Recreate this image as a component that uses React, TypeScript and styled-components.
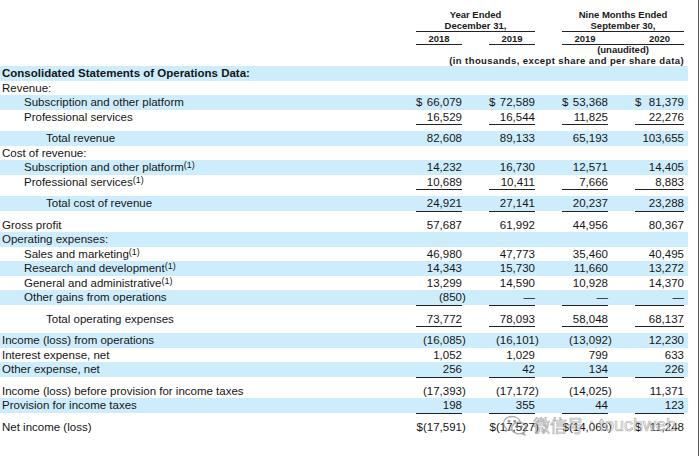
import React from "react";
import styled, { createGlobalStyle } from "styled-components";

const GlobalStyle = createGlobalStyle`
  html, body { margin: 0; padding: 0; background: #ffffff; }
  body { font-family: "Liberation Sans", Arial, sans-serif; color: #151515; }
`;

const Page = styled.div`
  position: relative;
  width: 698px;
  height: 456px;
  border-right: 1px solid #555;
  overflow: hidden;
  font-family: "Liberation Sans", Arial, sans-serif;
  color: #151515;
`;

const columns = "389px 46px 46px 46px 49px";

const Header = styled.div`
  display: grid;
  grid-template-columns: ${columns};
  column-gap: 27px;
  width: 688px;
  padding-top: 10px;
  font-weight: bold;
  font-size: 9.5px;
  line-height: 10.5px;
  color: #1a1a1a;
`;

const HeadCell = styled.div<{ $col: string; $row: number; $rule?: boolean; $align?: string; $spread?: boolean }>`
  grid-column: ${(p) => p.$col};
  grid-row: ${(p) => p.$row};
  text-align: ${(p) => p.$align || "center"};
  border-bottom: ${(p) => (p.$rule ? "1px solid #222" : "none")};
  letter-spacing: ${(p) => (p.$spread ? "0.4px" : "normal")};
  white-space: nowrap;
`;

const YearPair = styled.div`
  display: grid;
  grid-template-columns: 46px 49px;
  justify-content: space-between;
  text-align: center;
`;

const YearCell = styled(HeadCell)`
  padding-top: 1.5px;
`;

const Body = styled.div`
  display: flex;
  flex-direction: column;
  width: 688px;
  font-size: 11.5px;
`;

const Row = styled.div<{ $shade: boolean }>`
  display: grid;
  grid-template-columns: ${columns};
  column-gap: 27px;
  height: 14.5px;
  line-height: 14.5px;
  background: ${(p) => (p.$shade ? "#cdedfd" : "transparent")};
`;

const Label = styled.div<{ $indent: number; $bold?: boolean }>`
  padding-left: ${(p) => 2 + p.$indent * 22}px;
  font-weight: ${(p) => (p.$bold ? "bold" : "normal")};
  white-space: nowrap;
`;

const Note = styled.sup`
  font-size: 9px;
  vertical-align: 3px;
  line-height: 0;
`;

const Cell = styled.div<{ $rule?: boolean }>`
  display: flex;
  justify-content: space-between;
  box-sizing: border-box;
  white-space: nowrap;
  border-bottom: ${(p) => (p.$rule ? "1px solid #222" : "none")};
`;

const Amount = styled.span<{ $hang?: boolean }>`
  margin-left: auto;
  margin-right: ${(p) => (p.$hang ? "-0.333em" : "0")};
`;

const Spacer = styled.div`
  height: 7px;
`;

const Watermark = styled.div`
  position: absolute;
  left: 502px;
  top: 413px;
  display: flex;
  align-items: center;
  gap: 5px;
  font-family: "Noto Sans CJK SC", "Liberation Sans", sans-serif;
  font-size: 17px;
  line-height: 24px;
  color: rgba(255, 255, 255, 0.55);
  -webkit-text-stroke: 0.7px rgba(125, 125, 125, 0.65);
  pointer-events: none;
  white-space: nowrap;
`;

const WaterLatin = styled.span`
  font-family: "Liberation Sans", Arial, sans-serif;
  font-size: 18px;
`;

type RowData = {
  label: string;
  note?: boolean;
  indent: number;
  bold?: boolean;
  values?: string[];
  rule?: boolean;
  spaceAfter?: boolean;
};

const rows: RowData[] = [
  { label: "Consolidated Statements of Operations Data:", indent: 0, bold: true },
  { label: "Revenue:", indent: 0 },
  { label: "Subscription and other platform", indent: 1, values: ["$ 66,079", "$ 72,589", "$ 53,368", "$ 81,379"] },
  { label: "Professional services", indent: 1, values: ["16,529", "16,544", "11,825", "22,276"], rule: true, spaceAfter: true },
  { label: "Total revenue", indent: 2, values: ["82,608", "89,133", "65,193", "103,655"] },
  { label: "Cost of revenue:", indent: 0 },
  { label: "Subscription and other platform", note: true, indent: 1, values: ["14,232", "16,730", "12,571", "14,405"] },
  { label: "Professional services", note: true, indent: 1, values: ["10,689", "10,411", "7,666", "8,883"], rule: true, spaceAfter: true },
  { label: "Total cost of revenue", indent: 2, values: ["24,921", "27,141", "20,237", "23,288"], rule: true, spaceAfter: true },
  { label: "Gross profit", indent: 0, values: ["57,687", "61,992", "44,956", "80,367"] },
  { label: "Operating expenses:", indent: 0 },
  { label: "Sales and marketing", note: true, indent: 1, values: ["46,980", "47,773", "35,460", "40,495"] },
  { label: "Research and development", note: true, indent: 1, values: ["14,343", "15,730", "11,660", "13,272"] },
  { label: "General and administrative", note: true, indent: 1, values: ["13,299", "14,590", "10,928", "14,370"] },
  { label: "Other gains from operations", indent: 1, values: ["(850)", "—", "—", "—"], rule: true, spaceAfter: true },
  { label: "Total operating expenses", indent: 2, values: ["73,772", "78,093", "58,048", "68,137"], rule: true, spaceAfter: true },
  { label: "Income (loss) from operations", indent: 0, values: ["(16,085)", "(16,101)", "(13,092)", "12,230"] },
  { label: "Interest expense, net", indent: 0, values: ["1,052", "1,029", "799", "633"] },
  { label: "Other expense, net", indent: 0, values: ["256", "42", "134", "226"], rule: true, spaceAfter: true },
  { label: "Income (loss) before provision for income taxes", indent: 0, values: ["(17,393)", "(17,172)", "(14,025)", "11,371"] },
  { label: "Provision for income taxes", indent: 0, values: ["198", "355", "44", "123"], rule: true, spaceAfter: true },
  { label: "Net income (loss)", indent: 0, values: ["$(17,591)", "$(17,527)", "$(14,069)", "$ 11,248"] },
];

function ValueCell({ text, rule }: { text: string; rule?: boolean }) {
  const split = text.startsWith("$ ");
  const amount = split ? text.slice(2) : text;
  const hang = amount.endsWith(")");
  return (
    <Cell $rule={rule}>
      {split && <span>$</span>}
      <Amount $hang={hang}>{amount}</Amount>
    </Cell>
  );
}

function WeChatIcon() {
  const c = "rgba(125,125,125,0.65)";
  return (
    <svg width="26" height="22" viewBox="0 0 26 22" fill="none" stroke={c} strokeWidth="1.3">
      <path d="M10 2.5c-4.7 0-8.5 3-8.5 6.8 0 2.1 1.2 4 3.1 5.3l-0.8 2.6 3-1.6c1 0.3 2.1 0.5 3.2 0.5" />
      <path d="M18.4 8.4C17.6 5 14.2 2.5 10 2.5" />
      <ellipse cx="17" cy="14" rx="7.3" ry="5.8" />
      <path d="M21.5 18.6l1.2 2.2-3-1.2" />
      <circle cx="7" cy="7.3" r="0.9" fill={c} />
      <circle cx="12.7" cy="7.3" r="0.9" fill={c} />
      <circle cx="14.5" cy="12.8" r="0.8" fill={c} />
      <circle cx="19.5" cy="12.8" r="0.8" fill={c} />
    </svg>
  );
}

export default function App() {
  return (
    <>
      <GlobalStyle />
      <Page>
        <Header>
          <HeadCell $col="2 / 4" $row={1}>Year Ended</HeadCell>
          <HeadCell $col="4 / 6" $row={1}>Nine Months Ended</HeadCell>
          <HeadCell $col="2 / 4" $row={2} $rule>December 31,</HeadCell>
          <HeadCell $col="4 / 6" $row={2} $rule>September 30,</HeadCell>
          <YearCell $col="2 / 3" $row={3} $rule>2018</YearCell>
          <YearCell $col="3 / 4" $row={3} $rule>2019</YearCell>
          <YearCell $col="4 / 6" $row={3} $rule>
            <YearPair>
              <span>2019</span>
              <span>2020</span>
            </YearPair>
          </YearCell>
          <HeadCell $col="4 / 6" $row={4}>(unaudited)</HeadCell>
          <HeadCell $col="2 / 6" $row={5} $align="right" $spread>(in thousands, except share and per share data)</HeadCell>
        </Header>
        <Body>
          {rows.map((r, i) => (
            <React.Fragment key={i}>
              <Row $shade={i % 2 === 0}>
                <Label $indent={r.indent} $bold={r.bold}>
                  {r.label}
                  {r.note && <Note>(1)</Note>}
                </Label>
                {r.values?.map((v, j) => (
                  <ValueCell key={j} text={v} rule={r.rule} />
                ))}
              </Row>
              {r.spaceAfter && <Spacer />}
            </React.Fragment>
          ))}
        </Body>
        <Watermark>
          <WeChatIcon />
          <span>微信号</span>
          <WaterLatin>: touchweb</WaterLatin>
        </Watermark>
      </Page>
    </>
  );
}
